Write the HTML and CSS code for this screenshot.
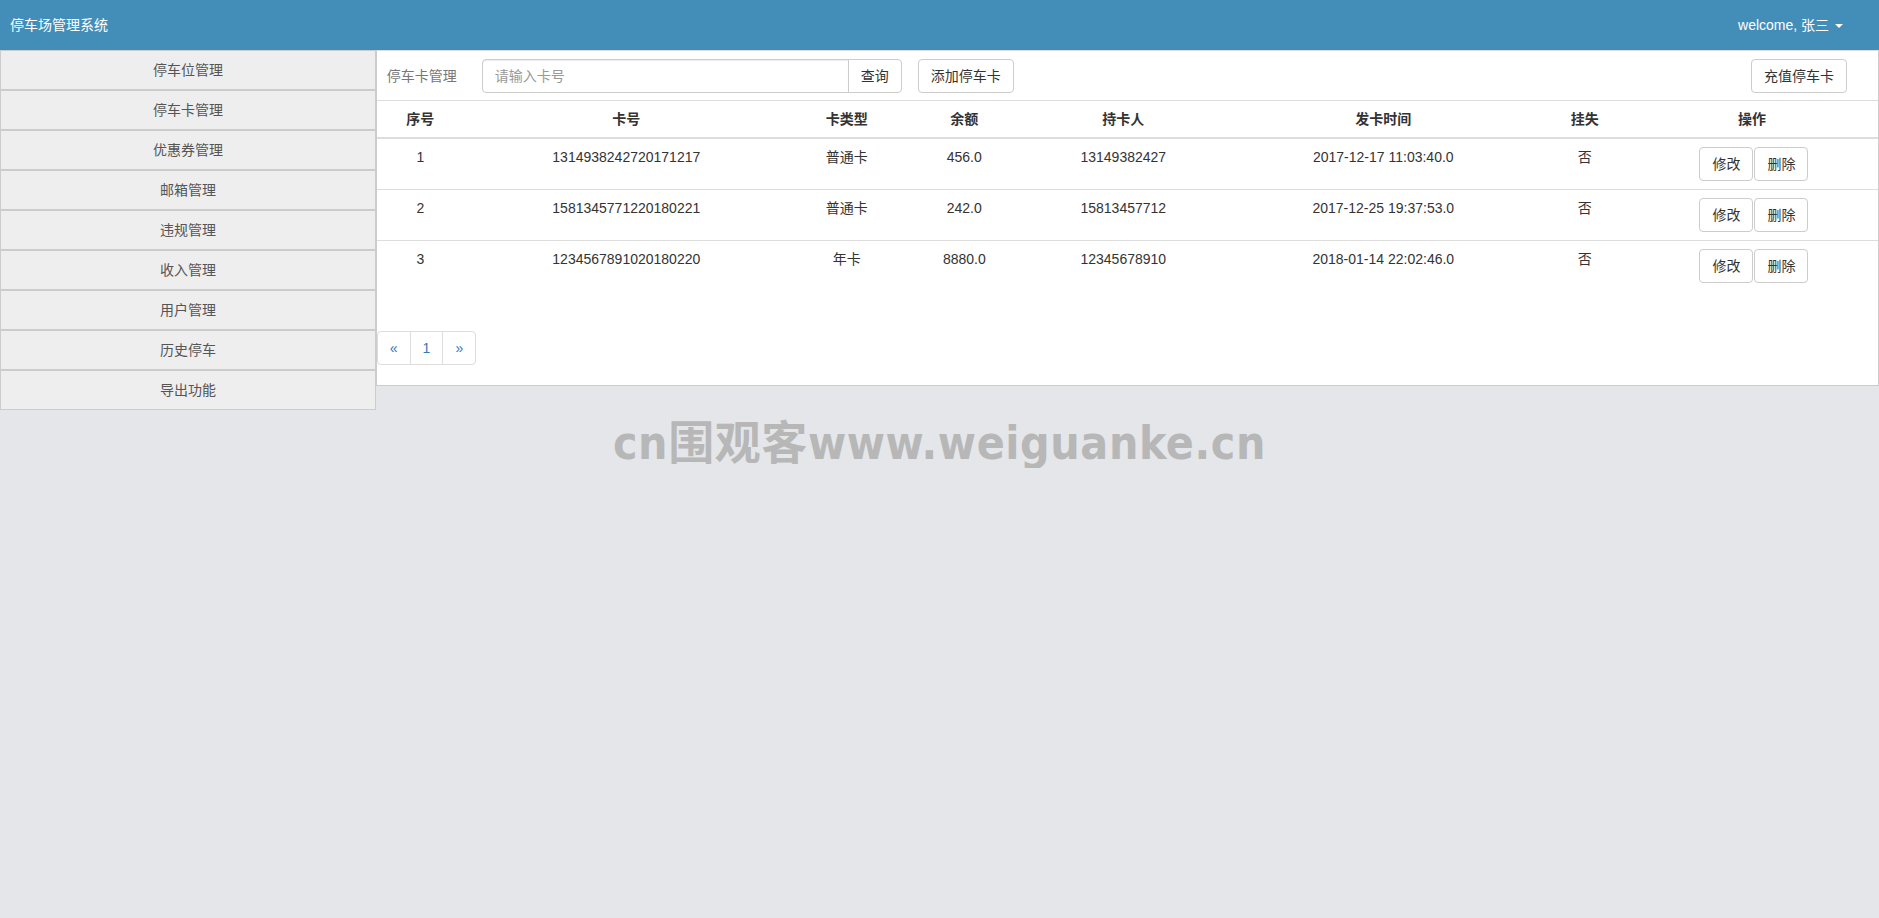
FILE: index.html
```html
<!DOCTYPE html>
<html lang="zh-CN">
  <head>
    <meta charset="utf-8">
    <title>停车场管理系统</title>
    <link rel="stylesheet" href="styles.css">
  </head>
  <body>
    <nav class="navbar">
      <div class="brand">停车场管理系统</div>
      <div class="user">welcome, 张三 <span class="caret"></span></div>
    </nav>
    <div class="layout">
      <ul class="sidebar">
        <li><a href="#">停车位管理</a></li>
        <li><a href="#">停车卡管理</a></li>
        <li><a href="#">优惠券管理</a></li>
        <li><a href="#">邮箱管理</a></li>
        <li><a href="#">违规管理</a></li>
        <li><a href="#">收入管理</a></li>
        <li><a href="#">用户管理</a></li>
        <li><a href="#">历史停车</a></li>
        <li><a href="#">导出功能</a></li>
      </ul>
      <div class="panel">
        <div class="toolbar">
          <span class="label">停车卡管理</span>
          <div class="input-group">
            <input type="text" placeholder="请输入卡号">
            <button class="btn">查询</button>
          </div>
          <button class="btn add">添加停车卡</button>
          <button class="btn recharge">充值停车卡</button>
        </div>
        <table>
          <colgroup>
            <col style="width: 87px">
            <col style="width: 325px">
            <col style="width: 116px">
            <col style="width: 119px">
            <col style="width: 199px">
            <col style="width: 321px">
            <col style="width: 82px">
            <col>
          </colgroup>
          <thead>
            <tr>
              <th>序号</th>
              <th>卡号</th>
              <th>卡类型</th>
              <th>余额</th>
              <th>持卡人</th>
              <th>发卡时间</th>
              <th>挂失</th>
              <th>操作</th>
            </tr>
          </thead>
          <tbody>
            <tr>
              <td>1</td>
              <td>1314938242720171217</td>
              <td>普通卡</td>
              <td>456.0</td>
              <td>13149382427</td>
              <td>2017-12-17 11:03:40.0</td>
              <td>否</td>
              <td><button class="btn">修改</button><button class="btn">删除</button></td>
            </tr>
            <tr>
              <td>2</td>
              <td>1581345771220180221</td>
              <td>普通卡</td>
              <td>242.0</td>
              <td>15813457712</td>
              <td>2017-12-25 19:37:53.0</td>
              <td>否</td>
              <td><button class="btn">修改</button><button class="btn">删除</button></td>
            </tr>
            <tr>
              <td>3</td>
              <td>1234567891020180220</td>
              <td>年卡</td>
              <td>8880.0</td>
              <td>12345678910</td>
              <td>2018-01-14 22:02:46.0</td>
              <td>否</td>
              <td><button class="btn">修改</button><button class="btn">删除</button></td>
            </tr>
          </tbody>
        </table>
        <ul class="pagination">
          <li><a href="#">&laquo;</a></li>
          <li><a href="#">1</a></li>
          <li><a href="#">&raquo;</a></li>
        </ul>
      </div>
    </div>
    <div class="watermark">cn围观客www.weiguanke.cn</div>
  </body>
</html>
```

FILE: styles.css
```css
body {
  margin: 0;
  background: #e4e6e9;
  color: #333333;
  font-family: "Liberation Sans", Arial, "Noto Sans CJK SC", sans-serif;
  font-size: 14px;
  line-height: 20px;
}

a {
  text-decoration: none;
}

.navbar {
  display: flex;
  align-items: center;
  justify-content: space-between;
  height: 50px;
  background: #438eb9;
  color: #FFFFFF;
}

.navbar .brand {
  padding-left: 10px;
}

.navbar .user {
  padding-right: 36px;
}

.caret {
  display: inline-block;
  width: 0;
  height: 0;
  margin-left: 2px;
  vertical-align: middle;
  border-top: 4px solid #FFFFFF;
  border-left: 4px solid transparent;
  border-right: 4px solid transparent;
}

.layout {
  display: flex;
  align-items: flex-start;
}

.sidebar {
  width: 20%;
  margin: 0;
  padding: 0;
  list-style: none;
}

.sidebar li a {
  display: block;
  height: 38px;
  line-height: 38px;
  text-align: center;
  color: #555555;
  background: #EEEEEE;
  border: 1px solid #cccccc;
}

.panel {
  flex: 1;
  background: #FFFFFF;
  border: 1px solid #cccccc;
  border-top-color: #dddddd;
}

.toolbar {
  display: flex;
  align-items: center;
  padding: 8px 31px 7px 10px;
}

.toolbar .label {
  color: #777777;
  margin-right: 25px;
}

.input-group {
  display: flex;
}

.input-group input {
  width: 367px;
  height: 34px;
  box-sizing: border-box;
  padding: 6px 12px;
  border: 1px solid #cccccc;
  border-radius: 4px 0 0 4px;
  font: inherit;
  color: #555555;
  box-shadow: inset 0 1px 1px rgba(0, 0, 0, 0.075);
}

.input-group input::placeholder {
  color: #999999;
}

.input-group .btn {
  margin-left: -1px;
  border-radius: 0 4px 4px 0;
}

.btn {
  display: inline-block;
  padding: 6px 12px;
  font-family: inherit;
  font-size: 14px;
  line-height: 20px;
  color: #333333;
  background: #FFFFFF;
  border: 1px solid #cccccc;
  border-radius: 4px;
}

.toolbar .add {
  margin-left: 16px;
}

.toolbar .recharge {
  margin-left: auto;
}

table {
  width: 100%;
  table-layout: fixed;
  border-collapse: collapse;
  border-spacing: 0;
  margin-bottom: 40px;
}

table th,
table td {
  padding: 8px;
  text-align: center;
  vertical-align: top;
  border-top: 1px solid #dddddd;
}

table th {
  font-weight: bold;
  border-bottom: 2px solid #dddddd;
}

table td:last-child {
  padding-left: 12px;
}

table td .btn + .btn {
  margin-left: 1px;
}

.pagination {
  display: flex;
  margin: 0 0 20px;
  padding: 0;
  list-style: none;
}

.pagination li a {
  display: block;
  padding: 6px 12px;
  margin-left: -1px;
  color: #337ab7;
  border: 1px solid #dddddd;
}

.pagination li:first-child a {
  margin-left: 0;
  border-radius: 4px 0 0 4px;
}

.pagination li:last-child a {
  border-radius: 0 4px 4px 0;
}

.watermark {
  margin-top: 8px;
  text-align: center;
  color: #b7b7b7;
  font-family: "DejaVu Sans Condensed", "Noto Sans CJK SC", sans-serif;
  font-weight: bold;
  font-size: 46px;
  line-height: 50px;
  letter-spacing: 0.6px;
}
```
